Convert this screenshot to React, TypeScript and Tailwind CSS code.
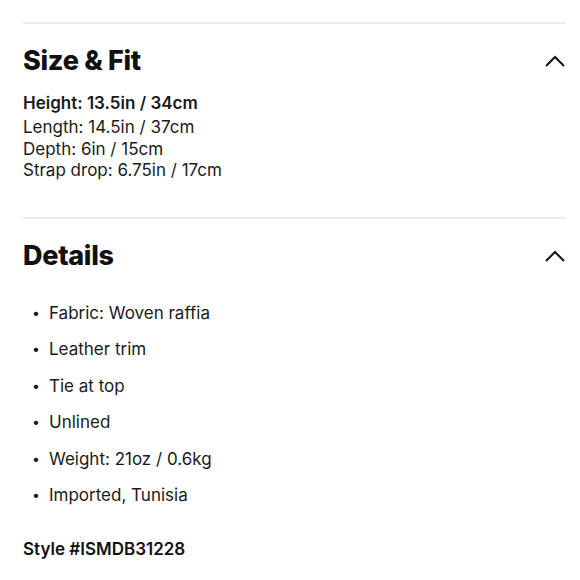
import React from "react";

function Chevron() {
  return (
    <svg width="22" height="14" viewBox="0 0 22 14" fill="none" className="block">
      <polyline points="2,12 11,3 20,12" stroke="#111" strokeWidth="2" fill="none" />
    </svg>
  );
}

export default function App() {
  const items = [
    "Fabric: Woven raffia",
    "Leather trim",
    "Tie at top",
    "Unlined",
    "Weight: 21oz / 0.6kg",
    "Imported, Tunisia",
  ];
  return (
    <div
      className="w-[580px] h-[580px] bg-white text-[#111] overflow-hidden"
      style={{ fontFamily: "Inter, 'Liberation Sans', sans-serif" }}
    >
      <div className="pl-[23px] pr-[14px] pt-[22px]">
        <div className="border-t-2 border-[#ececec]" />
        <div className="flex items-center justify-between pt-[21px]">
          <h2 className="text-[27px] leading-[32px] font-extrabold tracking-[-0.3px]">Size &amp; Fit</h2>
          <Chevron />
        </div>
        <div className="mt-[15px] text-[17px] leading-[22px] text-[#1a1a1a]">
          <div className="font-semibold">Height: 13.5in / 34cm</div>
          <div className="mt-[3px] leading-[21.5px]">Length: 14.5in / 37cm</div>
          <div className="leading-[21.5px]">Depth: 6in / 15cm</div>
          <div className="leading-[21.5px]">Strap drop: 6.75in / 17cm</div>
        </div>
        <div className="mt-[35px] border-t-2 border-[#ececec]" />
        <div className="flex items-center justify-between pt-[21px]">
          <h2 className="text-[27px] leading-[32px] font-extrabold tracking-[-0.3px]">Details</h2>
          <Chevron />
        </div>
        <ul className="mt-[23px] text-[17px] leading-[36.6px] text-[#1a1a1a]">
          {items.map((t) => (
            <li key={t} className="flex items-center">
              <span className="w-[26px] pl-[9px] text-[14px]">•</span>
              <span>{t}</span>
            </li>
          ))}
        </ul>
        <div className="mt-[24px] text-[17px] leading-[22px] font-semibold">Style #ISMDB31228</div>
      </div>
    </div>
  );
}
